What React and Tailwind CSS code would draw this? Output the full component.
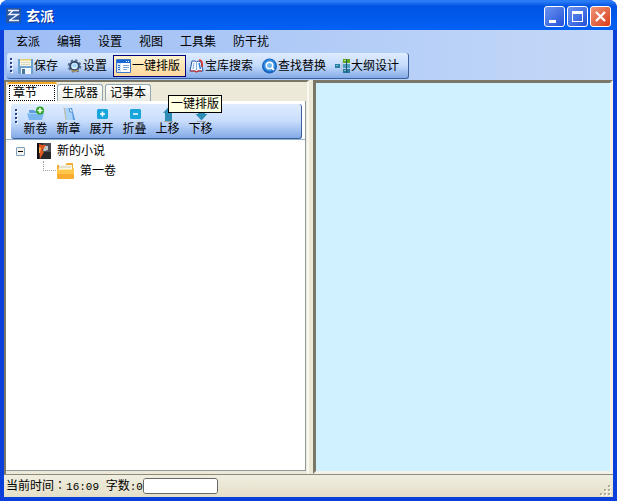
import React from 'react';

const menus = ['玄派', '编辑', '设置', '视图', '工具集', '防干扰'];

const tools = [
  { label: '保存', Icon: SaveIcon },
  { label: '设置', Icon: GearIcon },
  { label: '一键排版', Icon: LayoutIcon, active: true },
  { label: '宝库搜索', Icon: BookSearchIcon },
  { label: '查找替换', Icon: FindIcon },
  { label: '大纲设计', Icon: OutlineIcon },
];

const tabs = ['章节', '生成器', '记事本'];

const chapterTools = [
  { label: '新卷', Icon: NewVolumeIcon },
  { label: '新章', Icon: NewChapterIcon },
  { label: '展开', Icon: ExpandIcon },
  { label: '折叠', Icon: CollapseIcon },
  { label: '上移', Icon: UpIcon },
  { label: '下移', Icon: DownIcon },
];

export default function App() {
  return (
    <div className="flex h-screen min-h-[300px] flex-col rounded-t-lg bg-[#0a3fdc] font-['Liberation_Sans','Noto_Sans_CJK_SC',sans-serif] text-[12px] leading-4 text-black">
      <TitleBar />
      <div className="mx-1 mb-1 flex min-h-0 flex-1 flex-col bg-[#ece9d8]">
        <header className="bg-linear-to-r from-[#9ebdf5] to-[#c4d9f8]">
          <nav className="flex h-[23px] items-center gap-[17px] pl-3">
            {menus.map((menu) => (
              <button key={menu}>{menu}</button>
            ))}
          </nav>
          <Toolbar />
        </header>
        <main className="flex min-h-0 flex-1 gap-1">
          <ChapterPanel />
          <textarea
            aria-label="正文"
            className="min-w-0 flex-1 resize-none border-3 border-t-[#7b7768] border-r-[#f4f2e8] border-b-[#f4f2e8] border-l-[#7b7768] bg-[#d0f1ff] p-1 outline-none"
          />
        </main>
        <StatusBar />
      </div>
    </div>
  );
}

function TitleBar() {
  return (
    <div className="flex h-[30px] shrink-0 items-center rounded-t-lg bg-linear-to-b from-[#2a7bf6] from-5% via-[#0054e3] via-20% to-[#0461f5] pr-[6px] pl-[6px]">
      <AppIcon />
      <h1 className="ml-1 flex-1 pt-[2px] text-[14px] font-bold text-white [text-shadow:1px_1px_#0a2b8c]">玄派</h1>
      <div className="flex gap-[2px] pt-[3px]">
        <button aria-label="最小化" className="h-[21px] w-[21px] rounded-[3px] border border-white bg-linear-to-br from-[#6c93f0] to-[#2350d8]">
          <svg viewBox="0 0 19 19" className="h-[19px] w-[19px]">
            <path d="M4 13h7v3H4z" fill="#fff" />
          </svg>
        </button>
        <button aria-label="最大化" className="h-[21px] w-[21px] rounded-[3px] border border-white bg-linear-to-br from-[#6c93f0] to-[#2350d8]">
          <svg viewBox="0 0 19 19" className="h-[19px] w-[19px]">
            <path d="M4 4h11v11H4zM5 7v7h9V7z" fill="#fff" fillRule="evenodd" />
          </svg>
        </button>
        <button aria-label="关闭" className="h-[21px] w-[21px] rounded-[3px] border border-white bg-linear-to-br from-[#ee9478] to-[#d8380c]">
          <svg viewBox="0 0 19 19" className="h-[19px] w-[19px]">
            <path d="M5 5l9 9M14 5l-9 9" stroke="#fff" strokeWidth="2.2" />
          </svg>
        </button>
      </div>
    </div>
  );
}

function Grip() {
  return (
    <svg viewBox="0 0 4 18" className="h-[18px] w-1 shrink-0">
      {[1, 5, 9, 13].map((y) => (
        <g key={y}>
          <path d={`M2 ${y + 1}h2v2h-2z`} fill="#fff" />
          <path d={`M1 ${y}h2v2h-2z`} fill="#27418e" />
        </g>
      ))}
    </svg>
  );
}

function Toolbar() {
  return (
    <div className="flex h-[27px] pb-px pl-[3px]">
      <div className="flex items-center rounded-[3px] border-r border-b border-[#3b619c] bg-linear-to-b from-[#dfecff] via-[#c5dbfc] to-[#84aae6] pr-[3px] pl-[2px]">
        <Grip />
        <div className="flex pl-[2px]">
          {tools.map(({ label, Icon, active }) => (
            <button
              key={label}
              className={`flex h-[22px] items-center border pr-[5px] pl-[2px] whitespace-nowrap ${
                active ? 'border-[#000080] bg-linear-to-b from-[#fff4cd] to-[#ffd79b]' : 'border-transparent'
              }`}
            >
              <Icon />
              {label}
            </button>
          ))}
        </div>
      </div>
    </div>
  );
}

function ChapterPanel() {
  return (
    <section className="flex min-w-0 basis-[305px] flex-col border-t-2 border-r-2 border-l-2 border-[#7b7768] border-r-[#f8f7f0] pr-px pb-[3px]">
      <div role="tablist" className="relative flex h-[19px] items-end pl-px">
        {tabs.map((tab, i) => (
          <button
            key={tab}
            role="tab"
            aria-selected={i === 0}
            className={
              i === 0
                ? 'h-[19px] w-[50px] rounded-t-[3px] border-t-2 border-[#f5a623] bg-white px-[2px]'
                : 'mr-[2px] h-[17px] rounded-t-[3px] border border-b-0 border-[#91a7b4] bg-linear-to-b from-white to-[#ecebe2] px-1'
            }
          >
            {i === 0 ? (
              <span className="flex h-4 items-center border border-dotted border-black px-[3px]">{tab}</span>
            ) : (
              tab
            )}
          </button>
        ))}
        <div role="tooltip" className="absolute top-[13px] left-[162px] border border-black bg-[#ffffe1] px-[2px] whitespace-nowrap">
          一键排版
        </div>
      </div>
      <div className="flex min-h-0 flex-1 flex-col border border-t-0 border-l-0 border-[#919b9c] bg-white pt-[3px]">
        <div className="border-b border-[#8fb0cf] pr-[3px] pl-[5px]">
          <div className="flex h-[35px] items-center rounded-[3px] border-r border-b border-[#3b619c] bg-linear-to-b from-[#dfecff] via-[#c8ddfd] to-[#84aae6] pl-[3px]">
            <div className="flex h-full items-start pt-1">
              <Grip />
            </div>
            <div className="flex pl-px">
              {chapterTools.map(({ label, Icon }) => (
                <button key={label} className="flex w-[33px] flex-col items-center leading-[14px]">
                  <Icon />
                  {label}
                </button>
              ))}
            </div>
          </div>
        </div>
        <ul className="pt-px pl-[10px]">
          <li>
            <div className="flex h-5 items-center">
              <button aria-label="折叠" className="h-[9px] w-[9px] rounded-[1px] border border-[#7b9ebd] bg-[#f4f3ee]">
                <svg viewBox="0 0 7 7" className="h-[7px] w-[7px]">
                  <path d="M1 3h5v1H1z" />
                </svg>
              </button>
              <span className="ml-[11px] flex items-center gap-[5px]">
                <BookIcon />
                新的小说
              </span>
            </div>
            <ul className="pl-[27px]">
              <li className="flex h-5 items-center">
                <span className="h-[10px] w-[13px] self-start border-b border-l border-dotted border-[#a0a0a0]" />
                <span className="flex items-center gap-1">
                  <FolderIcon />
                  第一卷
                </span>
              </li>
            </ul>
          </li>
        </ul>
      </div>
    </section>
  );
}

function StatusBar() {
  return (
    <footer className="flex h-[23px] shrink-0 items-center border-t border-[#8d8a7c] bg-linear-to-b from-[#f0eee0] to-[#e4dfc8] pl-[2px]">
      <span className="whitespace-pre">
        当前时间<span className="font-['Noto_Sans_CJK_TC',sans-serif]" lang="zh-TW">：</span>
        <Digits>16:09 </Digits>
      </span>
      <label htmlFor="progress">
        字数<Digits>:0</Digits>
      </label>
      <progress
        id="progress"
        value={0}
        max={100}
        className="h-4 w-[75px] appearance-none overflow-hidden rounded-[3px] border border-[#686868] bg-white [&::-webkit-progress-bar]:bg-white"
      />
      <svg viewBox="0 0 12 12" className="mr-px ml-auto h-3 w-3 self-end">
        {[[8, 0], [4, 4], [8, 4], [0, 8], [4, 8], [8, 8]].map(([x, y]) => (
          <g key={`${x}-${y}`}>
            <path d={`M${x + 1} ${y + 1}h2v2h-2z`} fill="#fff" />
            <path d={`M${x} ${y}h2v2h-2z`} fill="#b2ac97" />
          </g>
        ))}
      </svg>
    </footer>
  );
}

function Digits({ children }) {
  return <span className="font-['Liberation_Mono',monospace] text-[11px]">{children}</span>;
}

function Svg({ children }) {
  return (
    <svg viewBox="0 0 16 16" className="h-4 w-4 shrink-0" aria-hidden="true">
      {children}
    </svg>
  );
}

function AppIcon() {
  return (
    <Svg>
      <path d="M0 1h15v15H0z" fill="#2a559f" />
      <path d="M2 3.500h11M6.500 4L3 7.500h9L4 13M3 13.500h10" stroke="#e8efff" strokeWidth="1.5" fill="none" />
    </Svg>
  );
}

function SaveIcon() {
  return (
    <Svg>
      <path d="M0 1h15v15H1l-1-1z" fill="#6fa3cf" />
      <path d="M2 1h11v7H2z" fill="#f8f6e2" />
      <path d="M2 1h11v1.500H2z" fill="#e9ce6c" />
      <path d="M3 4.500h9M3 6.500h9" stroke="#d5d6c4" />
      <path d="M3 10h10v6H3z" fill="#f0f6fb" />
      <path d="M4 11h3v5H4z" fill="#4b7a9c" />
    </Svg>
  );
}

function GearIcon() {
  return (
    <Svg>
      <circle cx="7.500" cy="8" r="5.800" fill="none" stroke="#5b6f88" strokeWidth="2" strokeDasharray="2.4 2.15" />
      <circle cx="7.500" cy="8" r="4.300" fill="#e6f4ff" stroke="#2e4d72" strokeWidth="2" />
      <circle cx="7.500" cy="7.500" r="2.300" fill="#a5d8fb" />
      <path d="M4 12q3.500 2.500 7 0" stroke="#c99a50" strokeWidth="1.2" fill="none" />
    </Svg>
  );
}

function LayoutIcon() {
  return (
    <Svg>
      <path d="M.5 1.500h14v13H.5z" fill="#fff" stroke="#3d78cf" />
      <path d="M1 2h13v3H1z" fill="#1967d2" />
      <path d="M1 5h4v9H1z" fill="#d4e5fa" />
      <path d="M2 7.500h2M2 9.500h2M2 11.500h2" stroke="#2f6dc4" />
      <path d="M7 7.500h6M7 9.500h6M7 11.500h4" stroke="#7ba3da" />
      <path d="M10 3h1v1h-1zM12 3h1v1h-1z" fill="#fff" />
    </Svg>
  );
}

function BookSearchIcon() {
  return (
    <Svg>
      <path d="M3 3L1 13h5l1.500 1L9 13h5L12 4 9 3 7.500 4 6 3z" fill="#f4faff" stroke="#2859a8" />
      <path d="M1 13h5l1.500 1L9 13h4" stroke="#d32d23" strokeWidth="1.2" fill="none" />
      <path d="M7.500 5v7M5 5l-1 6" stroke="#83acd8" />
      <path d="M10 2q4 0 3 7" stroke="#e52b20" strokeWidth="1.6" fill="none" />
      <path d="M10 5l1.500 6" stroke="#2e81d8" strokeWidth="1.5" />
    </Svg>
  );
}

function FindIcon() {
  return (
    <Svg>
      <circle cx="7.500" cy="8" r="7.500" fill="#1563bd" />
      <circle cx="7.500" cy="7.500" r="6" fill="#358fe2" />
      <circle cx="7.500" cy="7.500" r="3.300" fill="#71b8ef" stroke="#fff" strokeWidth="1.600" />
      <path d="M9.500 9.500l2.500 2.500" stroke="#fff" strokeWidth="2" />
    </Svg>
  );
}

function OutlineIcon() {
  return (
    <Svg>
      <path d="M5 8h4M7 3v10h2" stroke="#b4c0cc" fill="none" />
      <path d="M0 6h5v4H0z" fill="#287fa5" />
      <path d="M8 1h7v4H8z" fill="#5eaa18" />
      <path d="M8 6h7v4H8z" fill="#4f9fbd" />
      <path d="M8 11h7v4H8z" fill="#26799d" />
      <path d="M11.500 1v14" stroke="#1d566f" />
      <path d="M1 7.500h2M9 12.500h2" stroke="#79c3d8" />
      <path d="M9 2.500h2" stroke="#bde56b" />
    </Svg>
  );
}

function NewVolumeIcon() {
  return (
    <svg viewBox="0 0 18 16" className="h-4 w-[18px] shrink-0" aria-hidden="true">
      <path d="M2 4h5l1 1h7v9H3z" fill="#5f9ddb" />
      <path d="M0 7h17l-2 7H2z" fill="#79b5ee" />
      <path d="M1 7.500h15" stroke="#a9d3f8" />
      <circle cx="13" cy="4.500" r="4" fill="#2fa426" />
      <path d="M13 2v5M10.500 4.500h5" stroke="#fff" strokeWidth="1.500" />
    </svg>
  );
}

function NewChapterIcon() {
  return (
    <Svg>
      <path d="M4 2h7l3 12H6z" fill="#4f93d8" />
      <path d="M3 2h6l2 3 1 9H5z" fill="#a9d3fb" />
      <path d="M8 2l1 4 3 0" fill="#fff" stroke="#4a89c9" />
      <path d="M3 1.500l2 12.500" stroke="#c2b691" />
    </Svg>
  );
}

function ExpandIcon() {
  return (
    <Svg>
      <path d="M4 3h9l1 1v8l-1 1H4l-1-1V4z" fill="#18a5dc" />
      <path d="M8.500 5.500v5M6 8h5" stroke="#fff" strokeWidth="1.500" />
    </Svg>
  );
}

function CollapseIcon() {
  return (
    <Svg>
      <path d="M4 3h9l1 1v8l-1 1H4l-1-1V4z" fill="#18a5dc" />
      <path d="M6 8h5" stroke="#fff" strokeWidth="1.500" />
    </Svg>
  );
}

function UpIcon() {
  return (
    <Svg>
      <path d="M8.500 1L14 7h-2v8H5V7H3z" fill="#2f8db5" />
      <path d="M4 15.500h9" stroke="#a1a8ad" />
    </Svg>
  );
}

function DownIcon() {
  return (
    <Svg>
      <path d="M5 1h7v7h2.500l-6 6.500L2.500 8H5z" fill="#2f8db5" />
      <path d="M4 15.500h9" stroke="#a1a8ad" />
    </Svg>
  );
}

function BookIcon() {
  return (
    <Svg>
      <path d="M1 0h14v16H1z" fill="#29292b" />
      <path d="M7 0h8v9H7z" fill="#4c4e53" />
      <path d="M8 3h4v4l-3 1H7z" fill="#c4c7cc" />
      <path d="M3 1l3 1 4 0-2 3-2 2 2 2-3 5-1 2z" fill="#e0571d" />
      <path d="M3 4l2 1-1 5H3z" fill="#ffb05a" />
      <path d="M1 0h2v16H1z" fill="#101012" />
    </Svg>
  );
}

function FolderIcon() {
  return (
    <svg viewBox="0 0 20 16" className="h-4 w-5 shrink-0" aria-hidden="true">
      <path d="M1 2h8l2-2h6v6H1z" fill="#efae35" />
      <path d="M3 2h13v7H3z" fill="#f8f5e7" />
      <path d="M3 4h12" stroke="#d2cdbb" />
      <path d="M1 6h16l1-1v10l-1 1H2l-1-1z" fill="#ffc64c" />
      <path d="M1 11h17v4l-1 1H2l-1-1z" fill="#f8ad30" />
      <path d="M2 6.500h14" stroke="#ffe69b" />
    </svg>
  );
}
